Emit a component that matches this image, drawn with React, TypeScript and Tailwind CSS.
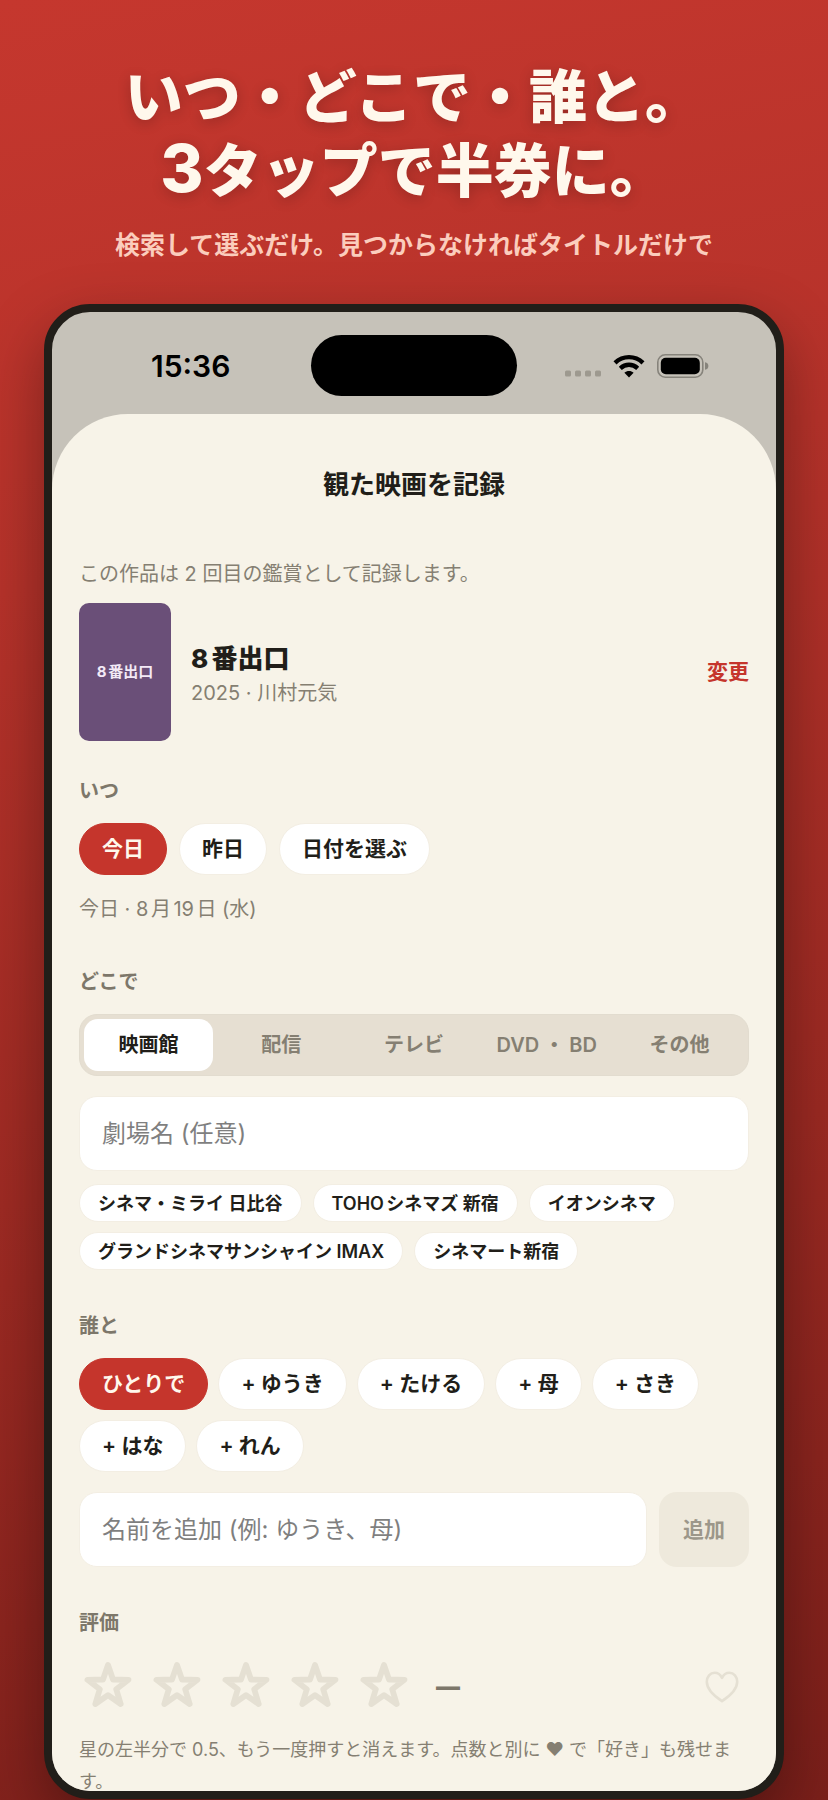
import { useState } from "react";

const DAYS = ["今日", "昨日", "日付を選ぶ"];
const PLACES = ["映画館", "配信", "テレビ", "DVD ・ BD", "その他"];
const THEATERS = [
  "シネマ・ミライ 日比谷",
  "TOHOシネマズ 新宿",
  "イオンシネマ",
  "グランドシネマサンシャイン IMAX",
  "シネマート新宿",
];
const FRIENDS = ["ゆうき", "たける", "母", "さき", "はな", "れん"];

interface PillProps {
  label: string;
  selected: boolean;
  onClick: () => void;
}

function Pill({ label, selected, onClick }: PillProps) {
  return (
    <button
      type="button"
      aria-pressed={selected}
      onClick={onClick}
      className={
        selected
          ? "h-[52px] rounded-full border border-[#c5352c] bg-[#c5352c] px-[22px] text-[21px] font-semibold text-[#fff8ec]"
          : "h-[52px] rounded-full border border-[#f3eee3] bg-white px-[22px] text-[21px] font-semibold text-[#211e19]"
      }
    >
      {label}
    </button>
  );
}

function SectionLabel({ children }: { children: string }) {
  return <h3 className="text-[20px] leading-7 font-semibold text-[#7d776a]">{children}</h3>;
}

function StatusBar() {
  return (
    <div className="grid h-[102px] grid-cols-[1fr_206px_1fr] items-center pt-[5px]">
      <p className="pl-[99px] text-[30px] leading-none font-semibold text-black">15:36</p>
      <div className="h-[61px] rounded-full bg-black" />
      <div className="flex items-center justify-end pr-[67px]">
        <svg width="36" height="22" viewBox="0 0 36 22" className="mr-3" fill="#9d998f" aria-hidden="true">
          <rect x="0" y="15.5" width="6" height="6" rx="1.5" />
          <rect x="10" y="15.5" width="6" height="6" rx="1.5" />
          <rect x="20" y="15.5" width="6" height="6" rx="1.5" />
          <rect x="30" y="15.5" width="6" height="6" rx="1.5" />
        </svg>
        <svg width="32" height="24" viewBox="0 0 32 24" className="mr-3" fill="none" stroke="#000" strokeWidth="4.4" aria-hidden="true">
          <path d="M2 8.8C10 1.2 22 1.2 30 8.8" />
          <path d="M7.3 14.3C12.4 9.6 19.6 9.6 24.7 14.3" />
          <path d="M16 23.4L11.4 18.8C14 16.4 18 16.4 20.6 18.8Z" fill="#000" stroke="none" />
        </svg>
        <svg width="52" height="24" viewBox="0 0 52 24" fill="none" aria-hidden="true">
          <rect x="0.8" y="0.8" width="45" height="22.4" rx="7.5" stroke="#86837b" strokeWidth="1.6" />
          <rect x="3.8" y="3.8" width="39" height="16.4" rx="5" fill="#000" />
          <path d="M48 8.2C50.4 8.8 51.4 10 51.4 12S50.4 15.2 48 15.8Z" fill="#86837b" />
        </svg>
      </div>
    </div>
  );
}

function StarIcon() {
  return (
    <svg width="48" height="48" viewBox="0 0 48 48" fill="none" stroke="#e5e0d3" strokeWidth="5.8" strokeLinejoin="round" aria-hidden="true">
      <path d="M24 4L29 18.5L44.5 18.8L32.2 28.2L36.7 43L24 34.2L11.3 43L15.8 28.2L3.5 18.8L19 18.5Z" />
    </svg>
  );
}

function HeartIcon() {
  return (
    <svg width="34" height="32" viewBox="0 0 34 32" fill="none" stroke="#e5e0d3" strokeWidth="2.6" strokeLinejoin="round" aria-hidden="true">
      <path d="M17 30.2C10 25.6 1.8 19 1.8 10.8C1.8 5.6 5.2 1.8 9.6 1.8C12.9 1.8 15.5 3.8 17 6.8C18.5 3.8 21.1 1.8 24.4 1.8C28.8 1.8 32.2 5.6 32.2 10.8C32.2 19 24 25.6 17 30.2Z" />
    </svg>
  );
}

export default function App() {
  const [day, setDay] = useState("今日");
  const [place, setPlace] = useState("映画館");
  const [theater, setTheater] = useState("");
  const [name, setName] = useState("");
  const [companions, setCompanions] = useState<string[]>([]);

  const toggle = (friend: string) =>
    setCompanions((previous) =>
      previous.includes(friend) ? previous.filter((item) => item !== friend) : [...previous, friend],
    );

  return (
    <div
      lang="ja"
      className="flex h-screen flex-col overflow-hidden bg-[linear-gradient(168deg,#c5372e_0%,#b5322a_30%,#9a2922_65%,#7a1f1a_100%)] pb-px font-['Inter','Noto_Sans_CJK_JP',sans-serif] text-[#211e19] [text-autospace:normal]"
    >
      <header className="shrink-0 pt-[60px] text-center">
        <h1 className="text-[58px] leading-[74px] font-black text-[#fff8ec] [text-autospace:no-autospace] [text-shadow:0_3px_14px_rgba(0,0,0,0.2)]">
          いつ・どこで・誰と。
          <br />
          <span className="text-[66px] leading-none font-extrabold">3</span>タップで半券に。
        </h1>
        <p className="mt-[19px] text-[25px] leading-9 font-semibold text-[#fbcdbd]">
          検索して選ぶだけ。見つからなければタイトルだけで
        </p>
      </header>

      {/* The screen is cut off by the frame, like a scrolled sheet */}
      <div className="mx-11 mt-[41px] min-h-0 flex-1 overflow-hidden rounded-[46px] border-8 border-[#211e19] bg-[#c6c2b9] shadow-[0_24px_60px_rgba(0,0,0,0.35)]">
        <StatusBar />

        <main className="rounded-t-[76px] bg-[#f7f3e8] px-[27px] pt-[51px]">
          <h2 className="text-center text-[26px] leading-10 font-bold">観た映画を記録</h2>

          <p className="mt-[55px] text-[20px] leading-7 text-[#857f72]">この作品は 2 回目の鑑賞として記録します。</p>

          <section className="mt-[15px] flex items-center">
            <div className="flex h-[138px] w-[92px] shrink-0 items-center justify-center rounded-[10px] bg-[#6a4f78] text-[15px] font-bold text-[#f3eaf6]">
              8番出口
            </div>
            <div className="ml-5 min-w-0 flex-1 pt-[5px]">
              <p className="text-[26px] leading-9 font-extrabold">8番出口</p>
              <p className="text-[20px] leading-8 text-[#857f72]">2025 · 川村元気</p>
            </div>
            <button type="button" className="text-[21px] font-semibold text-[#c5352c]">
              変更
            </button>
          </section>

          <section className="mt-9">
            <SectionLabel>いつ</SectionLabel>
            <div className="mt-[18px] flex flex-wrap gap-3">
              {DAYS.map((label) => (
                <Pill key={label} label={label} selected={label === day} onClick={() => setDay(label)} />
              ))}
            </div>
            <p className="mt-5 text-[20px] leading-7 text-[#857f72]">今日 · 8月19日 (水)</p>
          </section>

          <section className="mt-[45px]">
            <SectionLabel>どこで</SectionLabel>
            <div className="mt-[18px] grid grid-cols-5 gap-1 rounded-[18px] border border-[#e2dccf] bg-[#e6dfd2] p-1">
              {PLACES.map((label) => (
                <button
                  key={label}
                  type="button"
                  aria-pressed={label === place}
                  onClick={() => setPlace(label)}
                  className={
                    label === place
                      ? "h-[52px] rounded-[14px] bg-white text-[20px] font-bold whitespace-nowrap text-[#211e19]"
                      : "h-[52px] rounded-[14px] text-[20px] font-semibold whitespace-nowrap text-[#857f72]"
                  }
                >
                  {label}
                </button>
              ))}
            </div>
            <input
              type="text"
              aria-label="劇場名"
              placeholder="劇場名 (任意)"
              value={theater}
              onChange={(event) => setTheater(event.target.value)}
              className="mt-5 h-[75px] w-full rounded-[18px] border border-[#f3eee3] bg-white px-[22px] text-[24px] outline-none placeholder:text-[#7f7f7f]"
            />
            <div className="mt-[13px] flex flex-wrap gap-x-[11px] gap-y-[10px]">
              {THEATERS.map((label) => (
                <button
                  key={label}
                  type="button"
                  onClick={() => setTheater(label)}
                  className="h-[38px] rounded-full border border-[#f3eee3] bg-white px-[18px] text-[18px] font-semibold"
                >
                  {label}
                </button>
              ))}
            </div>
          </section>

          <section className="mt-[42px]">
            <SectionLabel>誰と</SectionLabel>
            <div className="mt-[18px] flex flex-wrap gap-[10px]">
              <Pill label="ひとりで" selected={companions.length === 0} onClick={() => setCompanions([])} />
              {FRIENDS.map((friend) => (
                <Pill
                  key={friend}
                  label={`+ ${friend}`}
                  selected={companions.includes(friend)}
                  onClick={() => toggle(friend)}
                />
              ))}
            </div>
            <div className="mt-5 flex gap-3">
              <input
                type="text"
                aria-label="名前を追加"
                placeholder="名前を追加 (例: ゆうき、母)"
                value={name}
                onChange={(event) => setName(event.target.value)}
                className="h-[75px] min-w-0 flex-1 rounded-[18px] border border-[#f3eee3] bg-white px-[22px] text-[24px] outline-none placeholder:text-[#7f7f7f]"
              />
              <button
                type="button"
                disabled={name.trim() === ""}
                className="h-[75px] rounded-[18px] bg-[#eee9dc] px-6 text-[21px] font-semibold text-[#9c978a]"
              >
                追加
              </button>
            </div>
          </section>

          <section className="mt-[42px]">
            <SectionLabel>評価</SectionLabel>
            <div className="mt-6 flex items-center pr-[10px] pl-[5px]">
              <div className="flex gap-[21px]">
                {[1, 2, 3, 4, 5].map((score) => (
                  <button key={score} type="button" aria-label={`${score}`}>
                    <StarIcon />
                  </button>
                ))}
              </div>
              <p className="ml-7 pt-1 text-[24px] leading-none font-black text-[#7d776a]">—</p>
              <button type="button" aria-label="好き" className="ml-auto pt-1">
                <HeartIcon />
              </button>
            </div>
            <p className="mt-[25px] text-[18px] leading-8 text-[#857f72]">
              星の左半分で 0.5、もう一度押すと消えます。点数と別に ♥ で「好き」も残せます。
            </p>
          </section>
        </main>
      </div>
    </div>
  );
}
